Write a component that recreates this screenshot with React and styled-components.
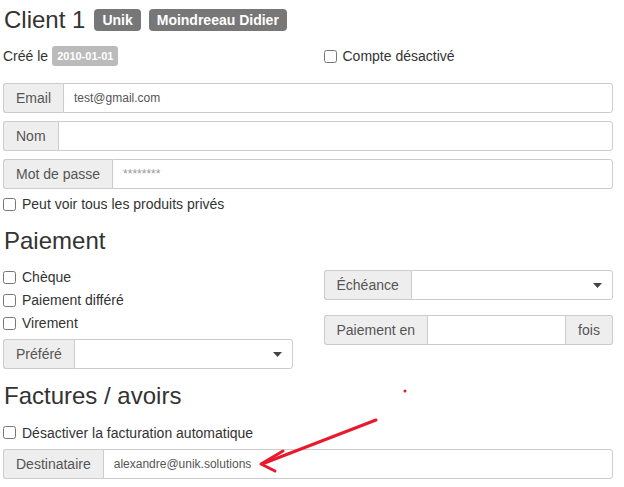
import React from 'react';
import styled, { createGlobalStyle } from 'styled-components';

const GlobalStyle = createGlobalStyle`
  html, body {
    margin: 0;
    padding: 0;
    background: #fff;
  }
  body {
    font-family: "Liberation Sans", Arial, sans-serif;
    font-size: 14px;
    color: #333;
  }
  * { box-sizing: border-box; }
`;

const Page = styled.div`
  position: relative;
  width: 624px;
  height: 487px;
  overflow: hidden;
  padding: 0 11px 0 3px;
`;

const TitleRow = styled.div`
  display: flex;
  align-items: center;
  height: 40px;
  gap: 8px;
`;

const Title = styled.h1`
  margin: 0 1px 0 1px;
  font-size: 24px;
  font-weight: 400;
  line-height: 1.1;
`;

const Heading = styled.h2`
  margin: ${p => p.$top}px 0 0 1px;
  font-size: 24px;
  font-weight: 400;
  line-height: 1.1;
`;

const Badge = styled.span`
  display: inline-flex;
  align-items: center;
  height: ${p => (p.$small ? 20 : 22)}px;
  padding: 0 ${p => (p.$small ? 5 : 8)}px;
  border-radius: ${p => (p.$small ? 3 : 4)}px;
  background: ${p => (p.$light ? '#bbb' : '#777')};
  color: #fff;
  font-size: ${p => (p.$small ? 11 : 14)}px;
  font-weight: 700;
`;

const TwoCols = styled.div`
  display: grid;
  grid-template-columns: 1fr 1fr;
  column-gap: 31px;
  margin-top: ${p => p.$top || 0}px;
  align-items: ${p => p.$align || 'start'};
`;

const Col = styled.div`
  display: flex;
  flex-direction: column;
`;

const Created = styled.div`
  display: flex;
  align-items: center;
  gap: 4px;
  height: 32px;
`;

const Check = styled.label`
  display: flex;
  align-items: center;
  gap: 6px;
  height: 20px;
  margin-top: ${p => p.$top || 0}px;
  font-size: 14px;
  color: #333;

  input {
    margin: 0;
    width: 13px;
    height: 13px;
  }
`;

const Group = styled.div`
  display: flex;
  height: 30px;
  margin-top: ${p => p.$top || 0}px;
`;

const Addon = styled.span`
  display: flex;
  align-items: center;
  padding: 0 12px;
  background: #eee;
  border: 1px solid #ccc;
  color: #555;
  font-size: 14px;
  white-space: nowrap;

  &:first-child {
    border-radius: 3px 0 0 3px;
    border-right: 0;
  }
  &:last-child {
    border-radius: 0 3px 3px 0;
    border-left: 0;
  }
`;

const Input = styled.input`
  flex: ${p => (p.$fixed ? '0 0 139px' : '1')};
  min-width: 0;
  height: 30px;
  padding: 0 10px;
  border: 1px solid #ccc;
  border-radius: ${p => (p.$middle ? '0' : '0 3px 3px 0')};
  font-family: "Liberation Sans", Arial, sans-serif;
  font-size: 12px;
  color: #555;
  outline: none;

  &::placeholder {
    color: #999;
  }
`;

const Select = styled.div`
  flex: 1;
  display: flex;
  align-items: center;
  justify-content: flex-end;
  padding-right: 10px;
  border: 1px solid #ccc;
  border-radius: 0 3px 3px 0;
  background: #fff;
`;

const Overlay = styled.svg`
  position: absolute;
  left: 0;
  top: 0;
  pointer-events: none;
`;

const Caret = () => (
  <svg width="9" height="5" viewBox="0 0 9 5">
    <path d="M0 0h9L4.5 5z" fill="#444" />
  </svg>
);

export default function App() {
  return (
    <>
      <GlobalStyle />
      <Page>
        <TitleRow>
          <Title>Client 1</Title>
          <Badge>Unik</Badge>
          <Badge>Moindreeau Didier</Badge>
        </TitleRow>

        <TwoCols $align="center">
          <Created>
            Créé le <Badge $small $light>2010-01-01</Badge>
          </Created>
          <Check>
            <input type="checkbox" /> Compte désactivé
          </Check>
        </TwoCols>

        <Group $top={11}>
          <Addon>Email</Addon>
          <Input defaultValue="test@gmail.com" />
        </Group>
        <Group $top={8}>
          <Addon>Nom</Addon>
          <Input />
        </Group>
        <Group $top={8}>
          <Addon>Mot de passe</Addon>
          <Input placeholder="********" />
        </Group>
        <Check $top={5}>
          <input type="checkbox" /> Peut voir tous les produits privés
        </Check>

        <Heading $top={14}>Paiement</Heading>

        <TwoCols $top={13}>
          <Col>
            <Check>
              <input type="checkbox" /> Chèque
            </Check>
            <Check $top={3}>
              <input type="checkbox" /> Paiement différé
            </Check>
            <Check $top={3}>
              <input type="checkbox" /> Virement
            </Check>
            <Group $top={6}>
              <Addon>Préféré</Addon>
              <Select>
                <Caret />
              </Select>
            </Group>
          </Col>
          <Col>
            <Group $top={3}>
              <Addon>Échéance</Addon>
              <Select>
                <Caret />
              </Select>
            </Group>
            <Group $top={15}>
              <Addon>Paiement en</Addon>
              <Input $middle $fixed />
              <Addon>fois</Addon>
            </Group>
          </Col>
        </TwoCols>

        <Heading $top={14}>Factures / avoirs</Heading>
        <Check $top={13}>
          <input type="checkbox" /> Désactiver la facturation automatique
        </Check>
        <Group $top={6}>
          <Addon>Destinataire</Addon>
          <Input defaultValue="alexandre@unik.solutions" />
        </Group>

        <Overlay width="624" height="487" viewBox="0 0 624 487">
          <circle cx="405" cy="391" r="1.5" fill="#e8192c" />
          <g stroke="#e8192c" strokeWidth="3" strokeLinecap="round" fill="none">
            <path d="M376 420L262 464" />
            <path d="M283 451L261 464L275 471" strokeLinejoin="round" />
          </g>
        </Overlay>
      </Page>
    </>
  );
}
